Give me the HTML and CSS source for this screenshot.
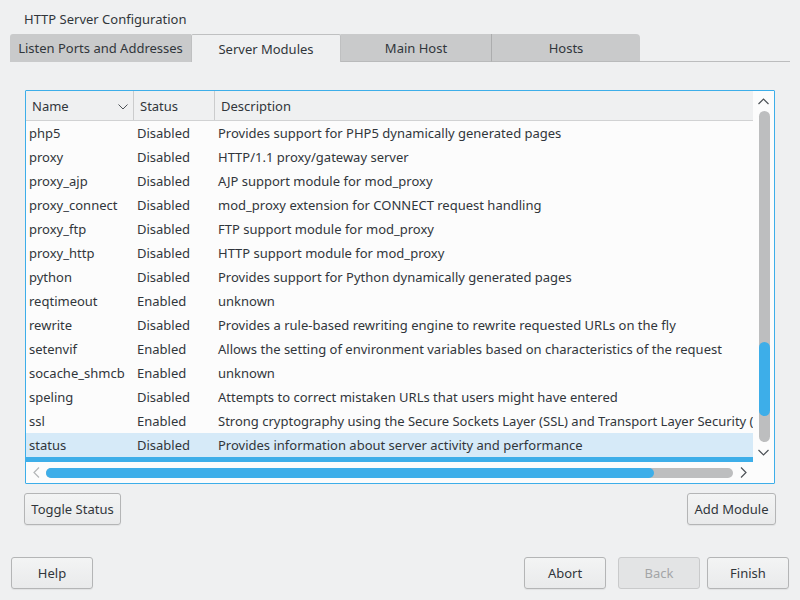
FILE: index.html
```html
<!DOCTYPE html>
<html>
<head>
<meta charset="utf-8">
<link rel="stylesheet" href="styles.css">
</head>
<body>
<div class="window">
  <div class="title">HTTP Server Configuration</div>
  <div class="tabbar">
    <div class="tab first">Listen Ports and Addresses</div>
    <div class="tab active">Server Modules</div>
    <div class="tab">Main Host</div>
    <div class="tab last">Hosts</div>
    <div class="tabfill"></div>
  </div>
  <div class="frame">
    <div class="view">
      <div class="header">
        <div class="hcell c-name">Name<svg class="sort" width="10" height="6" viewBox="0 0 10 6"><path d="M0.5 0.5 L5 5 L9.5 0.5" fill="none" stroke="#4d5257" stroke-width="1"/></svg></div>
        <div class="hcell c-status">Status</div>
        <div class="hcell c-desc">Description</div>
      </div>
      <div class="rows">
        <div class="row"><div class="cell c-name">php5</div><div class="cell c-status">Disabled</div><div class="cell c-desc">Provides support for PHP5 dynamically generated pages</div></div>
        <div class="row"><div class="cell c-name">proxy</div><div class="cell c-status">Disabled</div><div class="cell c-desc">HTTP/1.1 proxy/gateway server</div></div>
        <div class="row"><div class="cell c-name">proxy_ajp</div><div class="cell c-status">Disabled</div><div class="cell c-desc">AJP support module for mod_proxy</div></div>
        <div class="row"><div class="cell c-name">proxy_connect</div><div class="cell c-status">Disabled</div><div class="cell c-desc">mod_proxy extension for CONNECT request handling</div></div>
        <div class="row"><div class="cell c-name">proxy_ftp</div><div class="cell c-status">Disabled</div><div class="cell c-desc">FTP support module for mod_proxy</div></div>
        <div class="row"><div class="cell c-name">proxy_http</div><div class="cell c-status">Disabled</div><div class="cell c-desc">HTTP support module for mod_proxy</div></div>
        <div class="row"><div class="cell c-name">python</div><div class="cell c-status">Disabled</div><div class="cell c-desc">Provides support for Python dynamically generated pages</div></div>
        <div class="row"><div class="cell c-name">reqtimeout</div><div class="cell c-status">Enabled</div><div class="cell c-desc">unknown</div></div>
        <div class="row"><div class="cell c-name">rewrite</div><div class="cell c-status">Disabled</div><div class="cell c-desc">Provides a rule-based rewriting engine to rewrite requested URLs on the fly</div></div>
        <div class="row"><div class="cell c-name">setenvif</div><div class="cell c-status">Enabled</div><div class="cell c-desc">Allows the setting of environment variables based on characteristics of the request</div></div>
        <div class="row"><div class="cell c-name">socache_shmcb</div><div class="cell c-status">Enabled</div><div class="cell c-desc">unknown</div></div>
        <div class="row"><div class="cell c-name">speling</div><div class="cell c-status">Disabled</div><div class="cell c-desc">Attempts to correct mistaken URLs that users might have entered</div></div>
        <div class="row"><div class="cell c-name">ssl</div><div class="cell c-status">Enabled</div><div class="cell c-desc">Strong cryptography using the Secure Sockets Layer (SSL) and Transport Layer Security (TLS) protocols</div></div>
        <div class="row hover"><div class="cell c-name">status</div><div class="cell c-status">Disabled</div><div class="cell c-desc">Provides information about server activity and performance</div></div>
        <div class="row selected"></div>
      </div>
    </div>
    <div class="vscroll">
      <div class="arrow"><svg width="11" height="7" viewBox="0 0 11 7"><path d="M0.5 6 L5.5 1 L10.5 6" fill="none" stroke="#4d5257" stroke-width="1.2"/></svg></div>
      <div class="vgroove"><div class="vhandle"></div></div>
      <div class="arrow"><svg width="11" height="7" viewBox="0 0 11 7"><path d="M0.5 1 L5.5 6 L10.5 1" fill="none" stroke="#4d5257" stroke-width="1.2"/></svg></div>
    </div>
    <div class="hscroll">
      <div class="harrow"><svg width="7" height="11" viewBox="0 0 7 11"><path d="M6 0.5 L1 5.5 L6 10.5" fill="none" stroke="#b4b6b8" stroke-width="1.2"/></svg></div>
      <div class="hgroove"><div class="hhandle"></div></div>
      <div class="harrow"><svg width="7" height="11" viewBox="0 0 7 11"><path d="M1 0.5 L6 5.5 L1 10.5" fill="none" stroke="#4d5257" stroke-width="1.2"/></svg></div>
    </div>
    <div class="corner"></div>
  </div>
  <div class="actions">
    <button class="btn toggle">Toggle Status</button>
    <button class="btn add">Add Module</button>
  </div>
  <div class="footer">
    <button class="btn help">Help</button>
    <div class="spacer"></div>
    <button class="btn nav">Abort</button>
    <button class="btn nav disabled">Back</button>
    <button class="btn nav finish">Finish</button>
  </div>
</div>
</body>
</html>
```

FILE: styles.css
```css
html, body {
  margin: 0;
  padding: 0;
  background: #eff0f1;
}
body {
  font-family: "Noto Sans", "DejaVu Sans", sans-serif;
  font-size: 13px;
  color: #31363b;
}
.window {
  width: 800px;
  height: 600px;
  display: flex;
  flex-direction: column;
}
.title {
  margin: 10px 0 0 24px;
  height: 18px;
  line-height: 18px;
}
.tabbar {
  margin: 6px 10px 0 10px;
  display: flex;
  height: 28px;
}
.tab {
  height: 26px;
  padding-top: 1px;
  line-height: 27px;
  text-align: center;
  background: #c9cacb;
  border-bottom: 1px solid #b9babb;
  box-sizing: content-box;
  width: 150px;
}
.tab.first {
  width: 181px;
  border-top-left-radius: 3px;
  border-bottom-color: #c9cacb;
}
.tab.active {
  width: 148px;
  background: #eff0f1;
  border: 1px solid #bfc0c1;
  border-bottom: none;
  height: 26px;
  border-radius: 2px 2px 0 0;
}
.tab.last {
  width: 148px;
  border-left: 1px solid #acadae;
  border-top-right-radius: 4px;
}
.tabfill {
  flex: 1;
  border-bottom: 1px solid #bcbdbe;
  height: 27px;
}
.frame {
  margin: 28px 0 0 25px;
  width: 748px;
  height: 392px;
  border: 1px solid #3daee9;
  border-radius: 1px;
  background: #fcfcfc;
  display: grid;
  grid-template-columns: 727px 21px;
  grid-template-rows: 371px 21px;
}
.view {
  overflow: hidden;
  display: flex;
  flex-direction: column;
}
.header {
  display: flex;
  height: 29px;
  flex: none;
  background: #eff0f1;
  border-bottom: 1px solid #d1d2d3;
}
.hcell {
  line-height: 29px;
  padding-left: 6px;
  padding-top: 2px;
  white-space: nowrap;
  box-sizing: border-box;
  position: relative;
  display: flex;
  align-items: center;
}
.c-name { width: 108px; flex: none; }
.c-status { width: 81px; flex: none; }
.c-desc { flex: none; width: 560px; }
.hcell.c-name, .hcell.c-status {
  border-right: 1px solid #cbcccd;
}
.sort {
  position: absolute;
  right: 5px;
  top: 13px;
}
.rows {
  flex: none;
}
.row {
  display: flex;
  height: 24px;
  line-height: 24px;
  white-space: nowrap;
}
.cell {
  padding-left: 3px;
  box-sizing: border-box;
  overflow: hidden;
}
.cell.c-desc { overflow: visible; }
.row.hover {
  background: #d6eaf8;
}
.row.selected {
  background: #3daee9;
}
.vscroll {
  display: flex;
  flex-direction: column;
  align-items: center;
  background: #fcfcfc;
}
.arrow {
  height: 20px;
  width: 21px;
  display: flex;
  align-items: center;
  justify-content: center;
  flex: none;
}
.vgroove {
  flex: 1;
  width: 11px;
  margin-left: 1px;
  background: #bdbebf;
  border-radius: 6px;
  display: flex;
  flex-direction: column;
  justify-content: flex-end;
  padding-bottom: 26px;
}
.vhandle {
  height: 74px;
  background: #3daee9;
  border-radius: 6px;
}
.hscroll {
  display: flex;
  align-items: center;
  background: #fcfcfc;
}
.harrow {
  width: 20px;
  height: 21px;
  display: flex;
  align-items: center;
  justify-content: center;
  flex: none;
}
.hgroove {
  flex: 1;
  height: 10px;
  margin-top: 1px;
  background: #bdbebf;
  border-radius: 5px;
  display: flex;
}
.hhandle {
  width: 608px;
  background: #3daee9;
  border-radius: 5px;
}
.corner { background: #fcfcfc; }
.actions {
  display: flex;
  justify-content: space-between;
  margin: 9px 24px 0 24px;
}
.btn {
  font-family: "Noto Sans", "DejaVu Sans", sans-serif;
  font-size: 13px;
  color: #31363b;
  height: 32px;
  padding: 0 6px;
  border: 1px solid #b4b5b6;
  border-radius: 3px;
  background: linear-gradient(#f3f4f4, #e9eaeb);
  box-shadow: 0 1px 1px rgba(0,0,0,0.06);
}
.toggle { width: 97px; }
.add { width: 89px; }
.footer {
  display: flex;
  margin: 32px 11px 0 11px;
}
.spacer { flex: 1; }
.help, .nav { width: 82px; }
.nav { margin-left: 12px; }
.nav.finish { margin-left: 7px; }
.btn.disabled {
  color: #a3a5a7;
  background: #e3e4e5;
  border-color: #c9cacb;
  box-shadow: none;
}
```
